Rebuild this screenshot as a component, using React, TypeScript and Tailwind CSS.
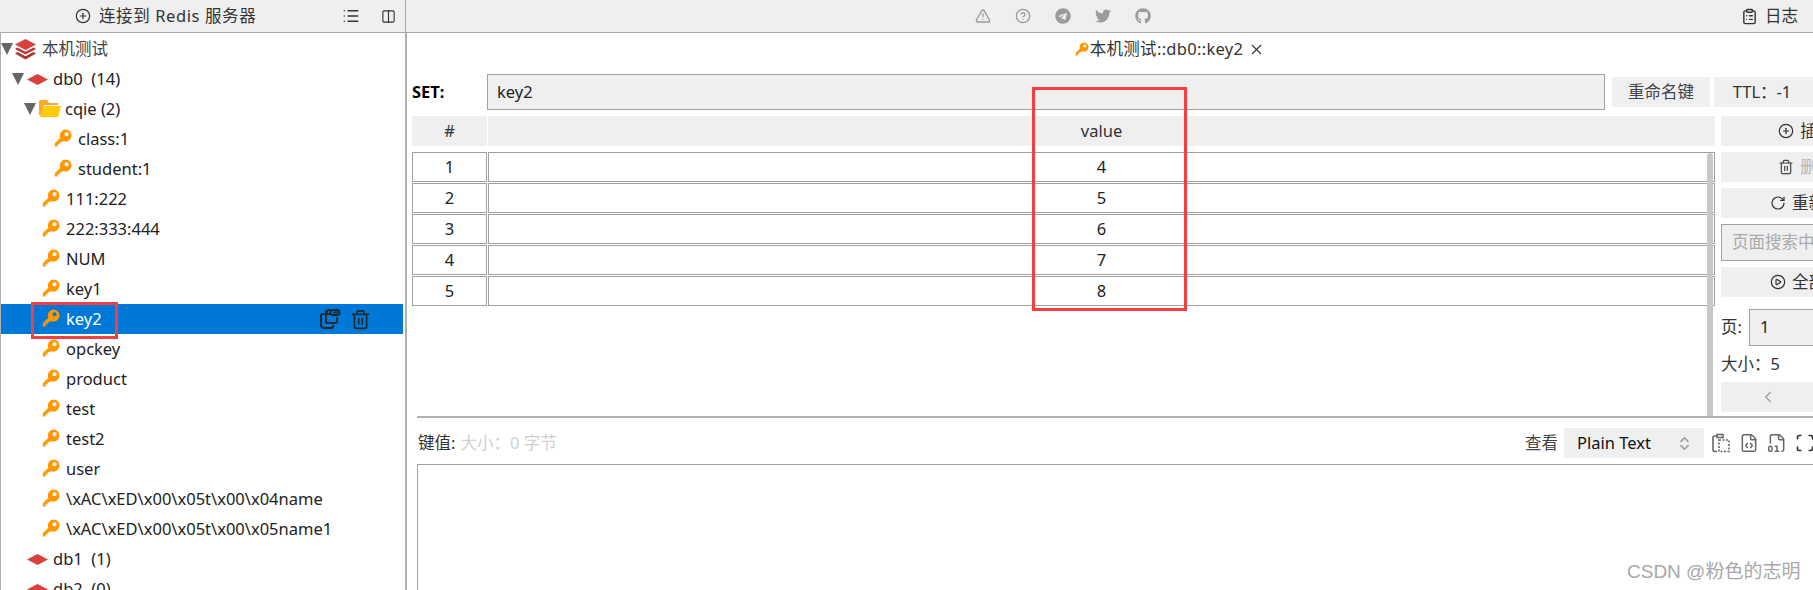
import { ChevronLeft, ChevronsUpDown, CirclePlay, CirclePlus, ClipboardList, CircleHelp, Columns2, FileCode, FileDigit, List, RotateCw, Scan, Trash2, TriangleAlert, X } from "lucide-react";
import { FaGithub, FaTelegram, FaTwitter } from "react-icons/fa";

const font = "font-['Noto_Sans','Noto_Sans_CJK_SC',sans-serif]";

function KeyIcon({ className }: { className: string }) {
  return (
    <svg viewBox="0 0 18 18" className={className}>
      <path
        fill="#ff9800"
        fillRule="evenodd"
        d="M11.5 0.5a6 6 0 1 1-2.6 11.4L7.6 13.2H5.6V15.2H3.6V17.4H0.8V14.2L6.3 8.7A6 6 0 0 1 11.5 0.5ZM12.6 3.2a2 2 0 1 0 0.01 0Z"
      />
    </svg>
  );
}

function Caret({ className = "" }: { className?: string }) {
  return <span className={`h-0 w-0 shrink-0 border-x-[6px] border-t-[12px] border-x-transparent border-t-[#666] ${className}`} />;
}

function DbIcon() {
  return (
    <svg viewBox="0 0 21 11" className="h-[11px] w-[21px] shrink-0">
      <path fill="#d9413c" d="M10.5 0 21 5.5 10.5 11 0 5.5Z" />
    </svg>
  );
}

function StackIcon() {
  return (
    <svg viewBox="0 0 21 21" className="h-[21px] w-[21px] shrink-0">
      <path fill="#d9413c" d="M10.5 0 21 5.5 10.5 11 0 5.5Z" />
      <path fill="#b93a36" d="M2.5 8.5 10.5 12.7 18.5 8.5 21 10 10.5 15.5 0 10Z" />
      <path fill="#a83531" d="M2.5 13 10.5 17.2 18.5 13 21 14.5 10.5 20.5 0 14.5Z" />
    </svg>
  );
}

function FolderIcon() {
  return (
    <svg viewBox="0 0 22 18" className="h-[18px] w-[22px] shrink-0">
      <path fill="#ffa726" d="M1 0H8L10 3H19V5H5L2 15H0V1Z" />
      <path fill="#ffca08" d="M5 6H22L19 17H1Z" />
    </svg>
  );
}

function KeyRow({ name, deep }: { name: string; deep?: boolean }) {
  return (
    <div className={`flex h-[30px] items-center gap-[6px] ${deep ? "pl-[53px]" : "pl-[41px]"}`}>
      <KeyIcon className="-mt-[2px] h-[18px] w-[18px] shrink-0" />
      <span>{name}</span>
    </div>
  );
}

function SelectedRow() {
  return (
    <div className="flex h-[30px] w-[402px] items-center gap-[6px] bg-[#0078d7] pl-[41px] text-white">
      <KeyIcon className="-mt-[2px] h-[18px] w-[18px] shrink-0" />
      <span>key2</span>
      <span className="ml-[209px] flex items-center gap-[9px] text-[#1f2a33]">
        <svg viewBox="0 0 24 24" fill="none" stroke="currentColor" strokeWidth="2" strokeLinecap="round" strokeLinejoin="round" className="h-[24px] w-[24px]">
          <path d="M13 7H6a2 2 0 0 0-2 2v9a3 3 0 0 0 3 3h7a2 2 0 0 0 2-2" />
          <path d="M9 4v11a2 2 0 0 0 1 1h8a2 2 0 0 0 2-2v-3" />
          <path d="M13 3h-1a2 2 0 0 0-2 2M16 3h4a2 2 0 0 1 0 5h-4a2 2 0 0 1 0-5ZM17 5.500h3" />
        </svg>
        <Trash2 size={21} strokeWidth={2} />
      </span>
    </div>
  );
}

function TableRow({ index, value }: { index: number; value: number }) {
  return (
    <div className="flex h-[31px] gap-px pb-[1px]">
      <div className="flex w-[75px] items-center justify-center border border-[#a0a0a0]">{index}</div>
      <div className="flex w-[1227px] items-center justify-center border border-[#a0a0a0]">{value}</div>
    </div>
  );
}

function SideButton({ icon, label, dim }: { icon: React.ReactNode; label: string; dim?: boolean }) {
  return (
    <div className={`flex h-[30px] items-center justify-center gap-[6px] bg-[#efefef] ${dim ? "text-[#b5b5b5]" : "text-[#333]"}`}>
      {icon}
      <span>{label}</span>
    </div>
  );
}

export default function App() {
  return (
    <div className={`relative flex h-[590px] w-[1813px] flex-col overflow-hidden bg-white text-[16.5px] text-[#222] ${font}`}>
      <header className="flex h-[33px] shrink-0 border-b border-[#a8a8a8] bg-[#efefef] text-[#333]">
        <div className="flex w-[406px] shrink-0 items-center border-r border-[#a8a8a8] pl-[75px]">
          <CirclePlus size={16} strokeWidth={1.8} />
          <span className="ml-[8px] tracking-[0.6px]">连接到 Redis 服务器</span>
          <List size={18} strokeWidth={1.8} className="ml-[86px]" />
          <Columns2 size={15} strokeWidth={1.8} className="ml-[21px]" />
        </div>
        <div className="flex flex-1 items-center gap-[24px] pl-[569px] text-[#9b9b9b]">
          <TriangleAlert size={16} />
          <CircleHelp size={16} />
          <FaTelegram size={16} />
          <FaTwitter size={16} />
          <FaGithub size={16} />
          <div className="ml-[566px] flex items-center gap-[7px] text-[#333]">
            <ClipboardList size={17} />
            <span>日志</span>
          </div>
        </div>
      </header>

      <div className="flex min-h-0 flex-1">
        <aside className="w-[407px] shrink-0 overflow-hidden border-x border-r-2 border-[#b0b0b0] pt-[1px]">
          <div className="flex h-[30px] items-center">
            <Caret />
            <span className="ml-[2px]"><StackIcon /></span>
            <span className="ml-[6px] text-[#444]">本机测试</span>
          </div>
          <div className="flex h-[30px] items-center pl-[11px]">
            <Caret />
            <span className="ml-[3px]"><DbIcon /></span>
            <span className="ml-[5px] whitespace-pre">db0  (14)</span>
          </div>
          <div className="flex h-[30px] items-center pl-[23px]">
            <Caret />
            <span className="ml-[3px]"><FolderIcon /></span>
            <span className="ml-[4px]">cqie (2)</span>
          </div>
          <KeyRow name="class:1" deep />
          <KeyRow name="student:1" deep />
          <KeyRow name="111:222" />
          <KeyRow name="222:333:444" />
          <KeyRow name="NUM" />
          <KeyRow name="key1" />
          <SelectedRow />
          <KeyRow name="opckey" />
          <KeyRow name="product" />
          <KeyRow name="test" />
          <KeyRow name="test2" />
          <KeyRow name="user" />
          <KeyRow name="\xAC\xED\x00\x05t\x00\x04name" />
          <KeyRow name="\xAC\xED\x00\x05t\x00\x05name1" />
          <div className="flex h-[30px] items-center gap-[5px] pl-[26px]">
            <DbIcon />
            <span className="whitespace-pre">db1  (1)</span>
          </div>
          <div className="flex h-[30px] items-center gap-[5px] pl-[26px]">
            <DbIcon />
            <span className="whitespace-pre">db2  (0)</span>
          </div>
        </aside>

        <main className="flex w-[1531px] shrink-0 flex-col pl-[5px]">
          <div className="flex h-[41px] items-center justify-center gap-[1px] pb-[9px] pr-[10px] text-[#333]">
            <KeyIcon className="h-[14px] w-[14px]" />
            <span className="tracking-[0.3px]">本机测试::db0::key2</span>
            <X size={17} strokeWidth={1.5} className="ml-[4px]" />
          </div>

          <div className="flex h-[36px] items-center">
            <span className="w-[75px] font-bold text-black">SET:</span>
            <div className="flex h-[36px] w-[1118px] items-center border border-[#a0a0a0] bg-[#efefef] pl-[9px]">key2</div>
            <div className="ml-[7px] flex h-[30px] w-[98px] items-center justify-center bg-[#efefef] text-[#444]">重命名键</div>
            <div className="ml-[4px] flex h-[30px] w-[99px] items-center justify-center bg-[#efefef] pr-[3px] text-[#333]">TTL：-1</div>
          </div>

          <div className="mt-[6px] flex h-[300px] gap-[6px]">
            <div className="relative w-[1303px] shrink-0">
              <div className="flex h-[30px] gap-px text-[#333]">
                <div className="flex w-[75px] items-center justify-center bg-[#efefef]">#</div>
                <div className="flex w-[1227px] items-center justify-center bg-[#efefef]">value</div>
              </div>
              <div className="mt-[6px]">
                {[4, 5, 6, 7, 8].map((value, i) => (
                  <TableRow key={value} index={i + 1} value={value} />
                ))}
              </div>
              <div className="absolute bottom-0 right-[2px] top-[37px] w-[6px] rounded-t-full bg-[#c8c8c8]" />
            </div>

            <div className="flex w-[186px] shrink-0 flex-col gap-[6px]">
              <SideButton icon={<CirclePlus size={16} strokeWidth={1.8} />} label="插入行" />
              <SideButton icon={<Trash2 size={16} strokeWidth={1.8} className="text-[#444]" />} label="删除行" dim />
              <SideButton icon={<RotateCw size={16} strokeWidth={1.8} />} label="重新载入" />
              <div className="flex h-[37px] items-center border border-[#a0a0a0] bg-[#efefef] pl-[10px] text-[#aaa]">页面搜索中...</div>
              <SideButton icon={<CirclePlay size={16} strokeWidth={1.8} />} label="全部提交" />
              <div className="mt-[6px] flex h-[37px] items-center">
                <span className="w-[28px] text-[#333]">页:</span>
                <div className="flex h-[37px] flex-1 items-center border border-[#a0a0a0] bg-[#efefef] pl-[10px]">1</div>
              </div>
              <div className="flex h-[24px] items-center text-[#333]">
                <span>大小：</span>
                <span>5</span>
              </div>
              <div className="flex h-[30px] items-center bg-[#efefef] pl-[38px] text-[#9aa3ad]">
                <ChevronLeft size={18} />
              </div>
            </div>
          </div>

          <div className="ml-[5px] h-[2px] bg-[#b0b0b0]" />

          <div className="flex h-[46px] items-center pl-[6px] pt-[4px]">
            <span className="text-[#333]">键值:</span>
            <span className="ml-[5px] text-[#d0d0d0]">大小：0 字节</span>
            <div className="ml-auto mr-[123px] flex items-center">
              <span className="text-[#444]">查看</span>
              <div className="ml-[6px] flex h-[30px] w-[140px] items-center justify-between bg-[#efefef] pl-[13px] pr-[11px] text-[#111]">
                <span>Plain Text</span>
                <ChevronsUpDown size={17} className="text-[#999]" />
              </div>
              <span className="ml-[7px] flex items-center gap-[8px] text-[#666]">
                <svg viewBox="0 0 20 20" fill="none" stroke="currentColor" strokeWidth="1.6" className="h-[20px] w-[20px]">
                  <path d="M6 3H3.500a1.500 1.500 0 0 0-1.500 1.500V17a1.500 1.500 0 0 0 1.500 1.500H6M6 1.500h6v3H6Z" />
                  <path d="M8 7h10v11.500H8Z" strokeDasharray="2 1.500" />
                </svg>
                <FileCode size={20} strokeWidth={1.8} />
                <FileDigit size={20} strokeWidth={1.8} />
                <Scan size={20} strokeWidth={2} className="text-[#333]" />
              </span>
            </div>
          </div>

          <div className="ml-[5px] flex-1 border-l border-t border-[#a0a0a0]" />
        </main>
      </div>

      <div className="absolute left-[31px] top-[302px] h-[37px] w-[87px] border-[3px] border-[#f63e3e]" />
      <div className="absolute left-[1032px] top-[87px] h-[224px] w-[155px] border-[3px] border-[#f63e3e]" />
      <div className="absolute left-[1627px] top-[561px] font-['Liberation_Sans','Noto_Sans_CJK_SC',sans-serif] text-[19px] leading-[22px] text-[#a8a8a8]">CSDN @粉色的志明</div>
    </div>
  );
}
